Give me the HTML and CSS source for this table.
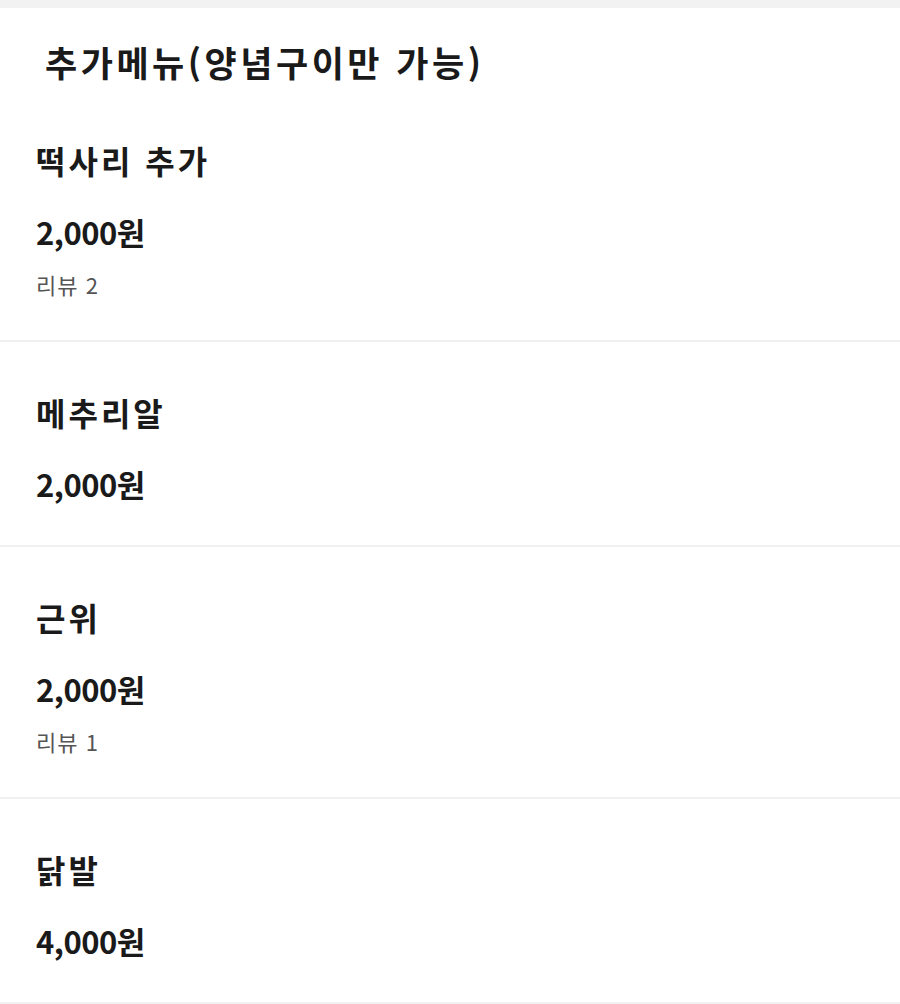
FILE: index.html
```html
<!DOCTYPE html>
<html lang="ko">
<head>
    <meta charset="UTF-8">
    <meta name="viewport" content="width=device-width, initial-scale=1.0">
    <title>추가메뉴</title>
    <link rel="stylesheet" href="styles.css">
</head>
<body>

    <div class="menu-section">
        <h2 class="section-title">추가메뉴(양념구이만 가능)</h2>

        <div class="menu-item">
            <div class="item-name">떡사리 추가</div>
            <div class="item-price">2,000원</div>
            <div class="item-review">리뷰 2</div>
        </div>

        <div class="menu-item">
            <div class="item-name">메추리알</div>
            <div class="item-price">2,000원</div>
        </div>

        <div class="menu-item">
            <div class="item-name">근위</div>
            <div class="item-price">2,000원</div>
            <div class="item-review">리뷰 1</div>
        </div>

        <div class="menu-item last">
            <div class="item-name">닭발</div>
            <div class="item-price">4,000원</div>
        </div>
    </div>

</body>
</html>
```

FILE: styles.css
```css
body {
    margin: 0;
    font-family: "Noto Sans CJK KR", "Noto Sans", sans-serif;
    background-color: #f2f2f2;
    color: #1a1a1a;
}

.menu-section {
    background-color: #fff;
    margin-top: 8px;
}

.section-title {
    margin: 0;
    padding: 32px 0 6px 45px;
    font-size: 35px;
    line-height: 44px;
    font-weight: bold;
    letter-spacing: 3.5px;
}

.menu-item {
    padding: 48px 36px 39px;
    border-bottom: 2px solid #f0f0f0;
}

.menu-item.last {
    border-bottom: none;
}

.item-name {
    font-size: 32px;
    line-height: 44px;
    font-weight: bold;
    letter-spacing: 3px;
}

.item-price {
    margin-top: 28px;
    font-size: 31px;
    line-height: 44px;
    font-weight: bold;
    letter-spacing: -0.5px;
}

.item-review {
    margin-top: 13px;
    font-size: 22px;
    line-height: 34px;
    color: #555;
    letter-spacing: 1px;
}
```
